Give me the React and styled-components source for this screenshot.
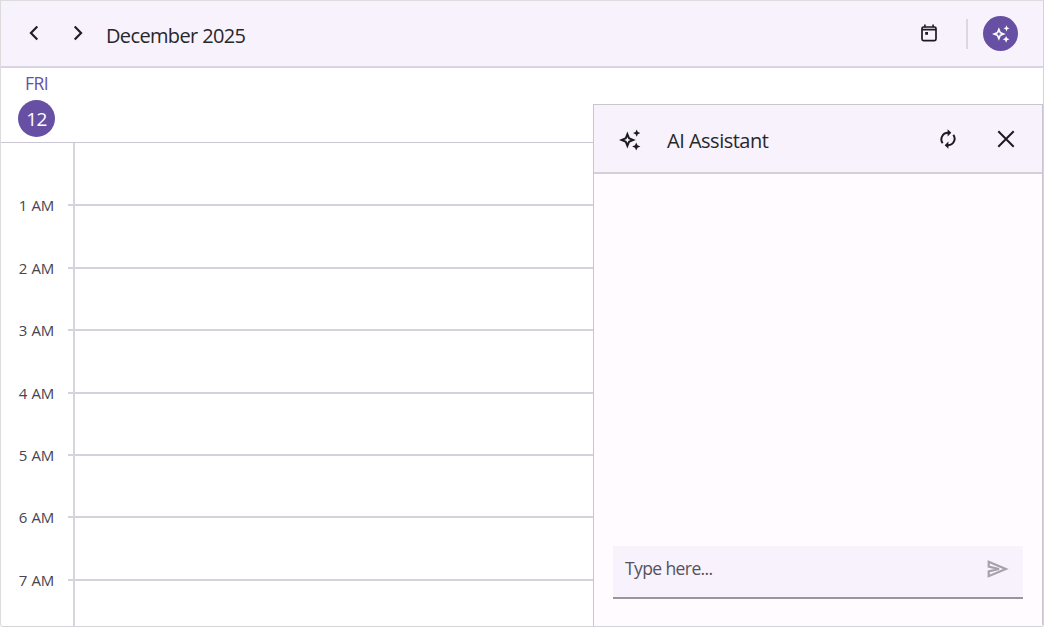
import React from 'react'
import styled, { createGlobalStyle } from "styled-components";

const GlobalStyle = createGlobalStyle`
*{
    box-sizing:border-box;
}
body{
    margin:0;
    background:#fff;
    font-family:"Segoe UI", "Open Sans", "Noto Sans", sans-serif;
}
button{
    display:flex;
    align-items:center;
    justify-content:center;
    padding:0;
    border:0;
    background:none;
    font:inherit;
    color:#1c1b1f;
    cursor:pointer;
}
svg{
    display:block;
}
`;

const Scheduler = styled.div`
position:relative;
display:flex;
flex-direction:column;
width:1044px;
height:627px;
border:1px solid #dcdbde;
border-right-color:#d5d2da;
border-bottom-color:#d5d4d8;
border-radius:0 0 3px 3px;
background:#fff;
overflow:hidden;
`;

const Toolbar = styled.header`
display:flex;
align-items:center;
height:67px;
padding:0 25px 0 17px;
border-bottom:2px solid #d9d4e1;
background:#f7f2fc;
`;

const NavButton = styled.button`
width:32px;
height:32px;
margin-right:12px;
padding-bottom:2px;
`;

const DateRange = styled.h1`
margin:4px 0 0;
font-size:20px;
font-weight:400;
line-height:28px;
letter-spacing:-0.64px;
color:#28272b;
`;

const CalendarButton = styled.button`
width:32px;
height:32px;
margin-left:auto;
padding-bottom:2px;
`;

const Separator = styled.span`
width:2px;
height:30px;
margin:0 15px 0 21px;
background:#dcd7e3;
`;

const AssistButton = styled.button`
width:35px;
height:35px;
border-radius:50%;
background:#6750a4;
color:#fff;
`;

const DateHeader = styled.div`
display:flex;
height:75px;
border-bottom:1px solid #cbc6d4;
`;

const DateCell = styled.div`
display:flex;
flex-direction:column;
align-items:center;
width:71px;
padding-top:4px;
`;

const DayName = styled.span`
font-size:17.5px;
line-height:22px;
letter-spacing:-0.6px;
color:#6750a4;
`;

const DayNumber = styled.span`
width:37px;
height:37px;
margin-top:6px;
border-radius:50%;
background:#6750a4;
color:#fff;
font-size:19px;
line-height:39px;
letter-spacing:-0.7px;
text-align:center;
`;

const TimeGrid = styled.div`
flex:1;
display:flex;
flex-direction:column;
overflow:hidden;
`;

const HourRow = styled.div`
display:flex;
flex:none;
height:${(props) => (props.$half ? "31.3px" : "62.4px")};
`;

const HourCell = styled.div`
display:flex;
align-items:center;
justify-content:flex-end;
width:72px;
font-size:15px;
letter-spacing:-0.3px;
word-spacing:1px;
color:#49454f;
`;

const Tick = styled.span`
width:5px;
height:2px;
margin-left:14px;
background:#d6d2dd;
`;

const Slot = styled.div`
display:flex;
align-items:center;
flex:1;
border-left:2px solid #d8d4df;
`;

const SlotLine = styled.span`
flex:1;
height:2px;
background:#d6d2dd;
`;

const AssistPanel = styled.section`
position:absolute;
top:103px;
right:0;
bottom:0;
display:flex;
flex-direction:column;
width:450px;
border:1px solid #cac5d1;
border-bottom:0;
background:#fffbff;
`;

const PanelHeader = styled.div`
display:flex;
align-items:center;
height:69px;
padding:0 20px 0 25px;
border-bottom:2px solid #d5cfdc;
background:#f7f2fc;
color:#1c1b1f;
`;

const PanelIcon = styled.span`
margin-top:3px;
`;

const PanelTitle = styled.h2`
flex:1;
margin:5px 0 0 26px;
font-size:20px;
font-weight:400;
line-height:28px;
letter-spacing:-0.5px;
color:#28272b;
`;

const PanelButton = styled.button`
width:32px;
height:32px;
margin-left:26px;
`;

const PanelBody = styled.div`
flex:1;
`;

const PromptBox = styled.div`
display:flex;
align-items:center;
height:53px;
margin:0 19px 27px;
padding:0 14px 6px 12px;
border-bottom:2px solid #99959f;
background:#f7f2fc;
`;

const Placeholder = styled.span`
flex:1;
margin-bottom:2px;
font-size:17.5px;
letter-spacing:-0.6px;
color:#55525b;
`;

const SendButton = styled.button`
color:#a6a2ac;
`;

const Chevron = ({ d }) => (
    <svg width="10" height="16" viewBox="0 0 10 16" fill="none" stroke="currentColor" strokeWidth="2.1">
        <path d={d} />
    </svg>
);

const SparkleIcon = ({ size }) => (
    <svg width={size} height={size} viewBox="0 0 22 22" fill="currentColor">
        <path fillRule="evenodd" d="M8.4 2.6 10.8 8.6 16.8 11 10.8 13.4 8.4 19.4 6 13.4 0 11 6 8.6ZM8.4 7.9 7.5 10.1 5.3 11 7.5 11.9 8.4 14.1 9.3 11.9 11.5 11 9.3 10.1Z" />
        <path d="M17.7.4 18.8 3 21.4 4.1 18.8 5.2 17.7 7.8 16.6 5.2 14 4.1 16.6 3Z" />
        <path d="M17.2 13.4 18.5 16.3 21.4 17.5 18.5 18.7 17.2 21.6 16 18.7 13.1 17.5 16 16.3Z" />
    </svg>
);

const CalendarIcon = () => (
    <svg width="16" height="18" viewBox="0 0 16 18" fill="none" stroke="currentColor">
        <rect x="1" y="3" width="14" height="13.6" rx="1.5" strokeWidth="1.7" />
        <path d="M1 5.6h14" strokeWidth="1.8" />
        <path d="M3.9.5v2.7M12.1.5v2.7" strokeWidth="1.6" />
        <path d="M4.2 9.4h2.8" strokeWidth="2.8" />
    </svg>
);

const RefreshIcon = () => (
    <svg width="16" height="20" viewBox="0 0 16 20" fill="none" stroke="currentColor" strokeWidth="2">
        <path d="M2.7 14.2A6.5 6.5 0 0 1 8 3.8h.8" />
        <path d="M13.3 5.8A6.5 6.5 0 0 1 8 16.2h-.8" />
        <path d="M7.6.2 11.3 3.8 7.6 7.4ZM8.4 12.6 4.7 16.2 8.4 19.8Z" fill="currentColor" stroke="none" />
    </svg>
);

const CloseIcon = () => (
    <svg width="18" height="18" viewBox="0 0 18 18" fill="none" stroke="currentColor" strokeWidth="2">
        <path d="M1.3 1.3 16.7 16.7M16.7 1.3 1.3 16.7" />
    </svg>
);

const SendIcon = () => (
    <svg width="22" height="18" viewBox="0 0 22 18" fill="none" stroke="currentColor" strokeWidth="2.2">
        <path d="M1.7 1.8 18.8 9 1.7 16.2V11.4L12 9 1.7 6.6Z" />
    </svg>
);

const hours = ["1 AM", "2 AM", "3 AM", "4 AM", "5 AM", "6 AM", "7 AM"];

const App = () => {
    return (
        <>
            <GlobalStyle />
            <Scheduler>
                <Toolbar>
                    <NavButton aria-label="Previous">
                        <Chevron d="M8.3 1.5 1.9 8l6.4 6.5" />
                    </NavButton>
                    <NavButton aria-label="Next">
                        <Chevron d="M1.7 1.5 8.1 8l-6.4 6.5" />
                    </NavButton>
                    <DateRange>December 2025</DateRange>
                    <CalendarButton aria-label="Today">
                        <CalendarIcon />
                    </CalendarButton>
                    <Separator />
                    <AssistButton aria-label="AI Assistant">
                        <SparkleIcon size={18} />
                    </AssistButton>
                </Toolbar>
                <DateHeader>
                    <DateCell>
                        <DayName>FRI</DayName>
                        <DayNumber>12</DayNumber>
                    </DateCell>
                </DateHeader>
                <TimeGrid>
                    <HourRow $half>
                        <HourCell />
                        <Slot />
                    </HourRow>
                    {hours.map((hour) => (
                        <HourRow key={hour}>
                            <HourCell>
                                {hour}
                                <Tick />
                            </HourCell>
                            <Slot>
                                <SlotLine />
                            </Slot>
                        </HourRow>
                    ))}
                    <HourRow $half>
                        <HourCell />
                        <Slot />
                    </HourRow>
                </TimeGrid>
                <AssistPanel>
                    <PanelHeader>
                        <PanelIcon>
                            <SparkleIcon size={22} />
                        </PanelIcon>
                        <PanelTitle>AI Assistant</PanelTitle>
                        <PanelButton aria-label="Refresh">
                            <RefreshIcon />
                        </PanelButton>
                        <PanelButton aria-label="Close">
                            <CloseIcon />
                        </PanelButton>
                    </PanelHeader>
                    <PanelBody />
                    <PromptBox>
                        <Placeholder>Type here...</Placeholder>
                        <SendButton aria-label="Send">
                            <SendIcon />
                        </SendButton>
                    </PromptBox>
                </AssistPanel>
            </Scheduler>
        </>
    );
};

export default App;
